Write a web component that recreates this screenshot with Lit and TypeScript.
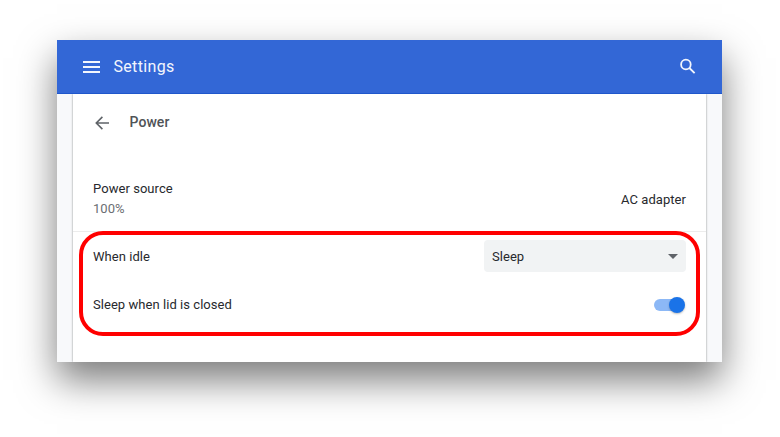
import { LitElement, html, css } from "lit";
import { customElement, state } from "lit/decorators.js";

@customElement("app-root")
class AppRoot extends LitElement {
  static styles = css`
    :host {
      display: flow-root;
      width: 780px;
      height: 437px;
      overflow: hidden;
      background: #fff;
      font-family: Roboto, "Liberation Sans", sans-serif;
      font-size: 13px;
      letter-spacing: 0.05px;
      color: #27292d;
    }
    * { box-sizing: border-box; }
    svg { display: block; }
    .window {
      display: flex;
      flex-direction: column;
      width: 665px;
      height: 322px;
      margin: 40px 0 0 57px;
      background: #f8f9fb;
      box-shadow: 0 18px 36px rgba(0, 0, 0, 0.52);
    }
    .toolbar {
      display: flex;
      align-items: center;
      height: 54px;
      flex: none;
      padding: 0 25px 0 26px;
      background: #3367d6;
      border-bottom: 1px solid #1f57cb;
      color: #f3f6fd;
    }
    .title {
      flex: 1;
      margin-left: 13.4px;
      font-size: 16px;
      letter-spacing: 0.35px;
    }
    .page {
      flex: 1;
      display: flex;
      flex-direction: column;
      width: 633px;
      margin-left: 16px;
      background: #fff;
      box-shadow: 0 0 2px rgba(60, 64, 67, 0.6);
      clip-path: inset(0 -3px 0 -3px);
    }
    .heading {
      display: flex;
      align-items: center;
      height: 56px;
      padding-left: 22px;
      gap: 20.5px;
      color: #505357;
      font-size: 14px;
      font-weight: 500;
      letter-spacing: 0.05px;
    }
    .back { margin-top: 1px; }
    .row {
      display: flex;
      align-items: center;
      justify-content: space-between;
      padding: 0 20px;
    }
    .source {
      height: 66px;
      margin-top: 16px;
      padding-top: 1px;
      border-bottom: 1px solid #ececec;
    }
    .detail { line-height: 20px; }
    .sub { color: #6b6e73; }
    .idle { height: 48px; }
    .lid { height: 49px; }
    .select {
      display: flex;
      align-items: center;
      justify-content: space-between;
      width: 202px;
      height: 32px;
      padding: 0 8px;
      border: 0;
      border-radius: 4px;
      background: #f1f3f4;
      font: inherit;
      letter-spacing: inherit;
      color: inherit;
    }
    .toggle {
      display: flex;
      align-items: center;
      justify-content: flex-end;
      width: 28px;
      height: 12px;
      margin-right: 4px;
      border-radius: 6px;
      background: #8cb8f6;
    }
    .knob {
      flex: none;
      width: 16px;
      height: 16px;
      margin-right: -3px;
      border-radius: 50%;
      background: #1a73e8;
      box-shadow: 0 1px 2px rgba(60, 64, 67, 0.35);
    }
    .options { position: relative; }
    .highlight {
      position: absolute;
      inset: -1px 6px auto 6px;
      height: 105px;
      border: 4px solid #f00;
      border-radius: 24px;
      pointer-events: none;
    }
  `;

  @state() private sleepOnLid = true;

  render() {
    return html`
      <div class="window">
        <header class="toolbar">
          <svg width="17" height="14" viewBox="0 0 17 14" fill="currentColor">
            <path d="M0 1h17v2H0zM0 6h17v2H0zM0 11h17v2H0z" />
          </svg>
          <span class="title">Settings</span>
          <svg width="18" height="18" viewBox="0 0 18 18" fill="none" stroke="currentColor" stroke-width="1.8">
            <circle cx="6.9" cy="6.5" r="4.8" />
            <path d="M10.4 10 15.6 15.2" />
          </svg>
        </header>
        <main class="page">
          <div class="heading">
            <svg class="back" width="14" height="14" viewBox="0 0 14 14" fill="none" stroke="#5f6368" stroke-width="1.6">
              <path d="M14 7H1.4M7.4 .9 1.3 7l6.1 6.1" />
            </svg>
            <span>Power</span>
          </div>
          <div class="row source">
            <div class="detail">
              <div>Power source</div>
              <div class="sub">100%</div>
            </div>
            <span>AC adapter</span>
          </div>
          <div class="options">
            <div class="row idle">
              <span>When idle</span>
              <button class="select">
                Sleep
                <svg width="10" height="5" viewBox="0 0 10 5"><path d="M0 0h10L5 5z" fill="#5f6368" /></svg>
              </button>
            </div>
            <div class="row lid">
              <span>Sleep when lid is closed</span>
              <div class="toggle" role="switch" aria-checked=${this.sleepOnLid}>
                <span class="knob"></span>
              </div>
            </div>
            <div class="highlight"></div>
          </div>
        </main>
      </div>
    `;
  }
}
